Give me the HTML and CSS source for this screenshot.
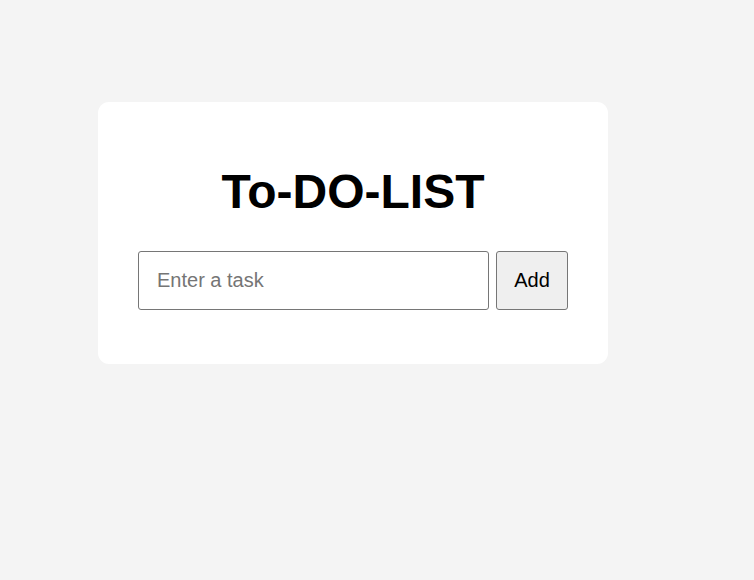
FILE: index.html
```html
<!DOCTYPE html>
<html lang="en">
<head>
<meta charset="utf-8">
<title>To-DO-LIST</title>
<link rel="stylesheet" href="styles.css">
</head>
<body>
  <div class="card">
    <h1 class="title">To-DO-LIST</h1>
    <form class="task-form" onsubmit="return false;">
      <input class="task-input" type="text" placeholder="Enter a task">
      <button class="add-btn" type="button">Add</button>
    </form>
  </div>
</body>
</html>
```

FILE: styles.css
```css
* {
  box-sizing: border-box;
}

html, body {
  margin: 0;
  height: 100%;
}

body {
  background: #f4f4f4;
  font-family: "Liberation Sans", Arial, sans-serif;
  padding: 102px 0 0 98px;
}

.card {
  width: 510px;
  background: #ffffff;
  border-radius: 11px;
  padding: 62px 40px 54px;
}

.title {
  margin: 0 0 31px;
  font-size: 48px;
  line-height: 56px;
  font-weight: bold;
  text-align: center;
  color: #000;
}

.task-form {
  display: flex;
  gap: 7px;
  margin: 0;
}

.task-input {
  flex: 1;
  height: 59px;
  padding: 0 18px;
  font-family: "Liberation Sans", Arial, sans-serif;
  font-size: 20px;
  border: 1px solid #767676;
  border-radius: 3px;
  background: #fff;
  color: #000;
}

.task-input::placeholder {
  color: #757575;
}

.add-btn {
  width: 72px;
  height: 59px;
  font-family: "Liberation Sans", Arial, sans-serif;
  font-size: 20px;
  color: #000;
  background: #efefef;
  border: 1px solid #767676;
  border-radius: 3px;
  padding: 0;
}
```
